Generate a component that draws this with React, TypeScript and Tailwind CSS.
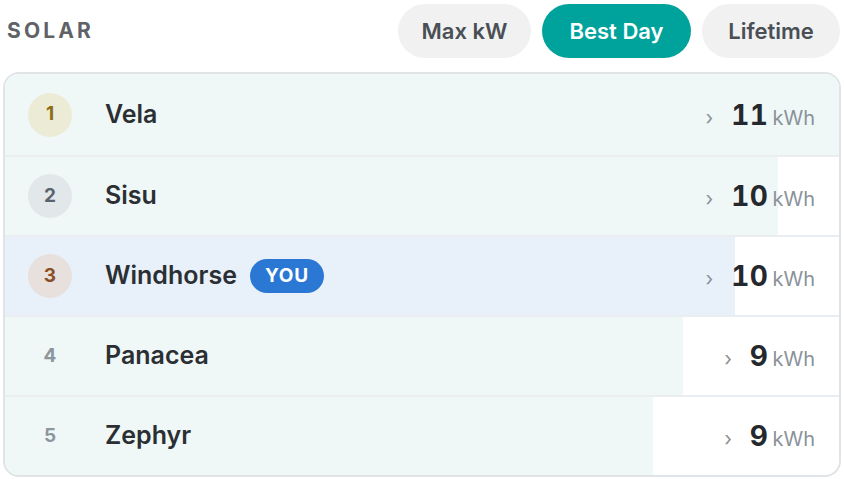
const rows = [
  { rank: 1, name: "Vela", value: 11, pct: 100 },
  { rank: 2, name: "Sisu", value: 10, pct: 92.7 },
  { rank: 3, name: "Windhorse", value: 10, pct: 87.5, you: true },
  { rank: 4, name: "Panacea", value: 9, pct: 81.3 },
  { rank: 5, name: "Zephyr", value: 9, pct: 77.7 },
];

const medal: Record<number, string> = {
  1: "bg-[#ecebd6] text-[#8c6c17]",
  2: "bg-[#e2e7ea] text-[#59636d]",
  3: "bg-[#e8e0dd] text-[#8a4f28]",
};

function Rank({ rank }: { rank: number }) {
  if (medal[rank]) {
    return (
      <div
        className={`flex h-[44px] w-[44px] items-center justify-center rounded-full text-[19px] font-bold ${medal[rank]}`}
      >
        {rank}
      </div>
    );
  }
  return (
    <div className="flex h-[44px] w-[44px] items-center justify-center text-[19px] font-bold text-[#8e959c]">
      {rank}
    </div>
  );
}

export default function App() {
  return (
    <div
      className="h-[479px] w-[844px] bg-white px-[3px] pt-[4px]"
      style={{ fontFamily: "Inter, 'Noto Sans', sans-serif" }}
    >
      <div className="flex items-center justify-between">
        <div className="pl-[4px] text-[21px] font-bold tracking-[0.15em] text-[#5f6368]">SOLAR</div>
        <div className="mr-[1px] flex gap-[11px]">
          <button className="h-[54px] w-[133px] rounded-full bg-[#f1f1f2] text-[22px] font-semibold text-[#4a4f55]">
            Max kW
          </button>
          <button className="h-[54px] w-[149px] rounded-full bg-[#00a39b] text-[22px] font-semibold text-white">
            Best Day
          </button>
          <button className="h-[54px] w-[138px] rounded-full bg-[#f1f1f2] text-[22px] font-semibold text-[#4a4f55]">
            Lifetime
          </button>
        </div>
      </div>

      <div className="mt-[14px] overflow-hidden rounded-[16px] border-2 border-[#e0e4e6]">
        {rows.map((r, i) => (
          <div
            key={r.rank}
            className={`relative flex items-center ${i > 0 ? "h-[80px] border-t-2 border-[#ebeef0]" : "h-[81px]"}`}
          >
            <div
              className={`absolute inset-y-0 left-0 ${r.you ? "bg-[#e8f0fa]" : "bg-[#eff8f7]"}`}
              style={{ width: `${r.pct}%` }}
            />
            <div className="relative ml-[23px]">
              <Rank rank={r.rank} />
            </div>
            <div className="relative ml-[33px] flex items-center gap-[13px]">
              <span className="text-[25px] font-semibold text-[#2b2f33]">{r.name}</span>
              {r.you && (
                <span className="rounded-full bg-[#2a78d4] px-[15px] py-[3px] text-[19px] font-bold tracking-[0.04em] text-white">
                  YOU
                </span>
              )}
            </div>
            <div className="relative ml-auto mr-[24px] flex items-baseline">
              <span className="mr-[18px] text-[20px] text-[#8a9199]">›</span>
              <span className="text-[28px] font-bold tabular-nums tracking-[0.02em] text-[#25292d]">{r.value}</span>
              <span className="ml-[4px] text-[20px] text-[#8a9199]">kWh</span>
            </div>
          </div>
        ))}
      </div>
    </div>
  );
}
